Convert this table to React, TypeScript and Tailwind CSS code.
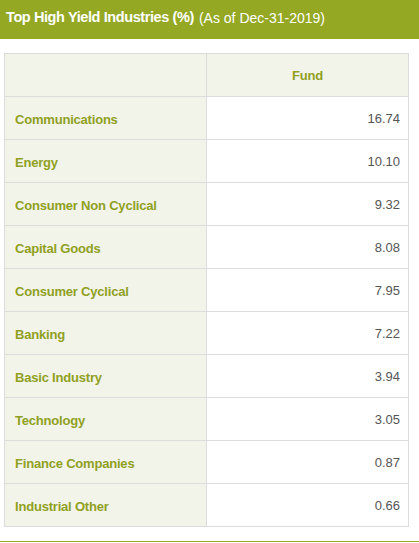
import React from "react";

const rows: [string, string][] = [
  ["Communications", "16.74"],
  ["Energy", "10.10"],
  ["Consumer Non Cyclical", "9.32"],
  ["Capital Goods", "8.08"],
  ["Consumer Cyclical", "7.95"],
  ["Banking", "7.22"],
  ["Basic Industry", "3.94"],
  ["Technology", "3.05"],
  ["Finance Companies", "0.87"],
  ["Industrial Other", "0.66"],
];

export default function App() {
  return (
    <div className="w-[419px] h-[543px] bg-white" style={{ fontFamily: '"Liberation Sans", Arial, sans-serif' }}>
      <div className="h-[39px] bg-[#94a824] flex items-center pl-[6px] text-white pb-[3px]">
        <span className="font-bold text-[14.5px] tracking-[-0.4px]">Top High Yield Industries (%)</span>
        <span className="ml-[5px] text-[14px]">(As of Dec-31-2019)</span>
      </div>
      <div className="pt-[14px] px-[4px] pr-[10px]">
        <table className="w-[405px] border-collapse text-[13px]">
          <tbody>
            <tr className="h-[43px]">
              <td className="w-[202px] bg-[#f3f4e9] border border-[#dcdcdc]"></td>
              <td className="bg-[#f3f4e9] border border-[#dcdcdc] text-center font-bold text-[#8fa11f] tracking-[-0.2px] pt-[2px]">Fund</td>
            </tr>
            {rows.map(([k, v]) => (
              <tr key={k} className="h-[43px]">
                <td className="bg-[#f3f4e9] border border-[#dcdcdc] pl-[10px] pt-[3px] font-bold text-[#8fa11f] tracking-[-0.2px]">{k}</td>
                <td className="bg-white border border-[#dcdcdc] pr-[8px] pt-[1px] text-right text-[#555]">{v}</td>
              </tr>
            ))}
          </tbody>
        </table>
      </div>
      <div className="mt-[14px] h-[1px] bg-[#94a824]"></div>
    </div>
  );
}
